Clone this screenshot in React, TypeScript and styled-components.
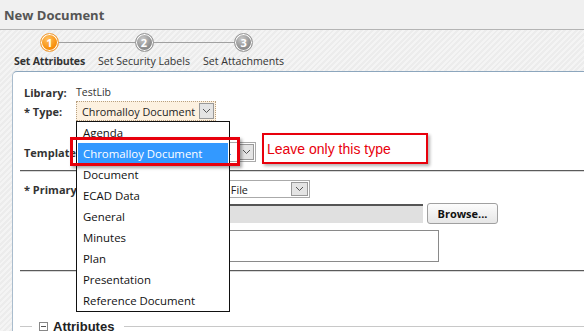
import React from "react";
import styled, { createGlobalStyle } from "styled-components";

const Global = createGlobalStyle`
  html, body { margin: 0; padding: 0; }
  body {
    width: 584px; height: 331px; overflow: hidden;
    font-family: "Open Sans", "Noto Sans", sans-serif;
    background: #efefef;
  }
  #root { height: 100%; }
`;

const Page = styled.div`
  display: flex; flex-direction: column; height: 331px;
  background: repeating-linear-gradient(135deg, #ececec 0 2px, #f4f4f4 2px 4px);
`;

const Header = styled.div`
  height: 29px; background: #f0f0f0; border-bottom: 1px solid #b4b4b4;
  display: flex; align-items: center; padding-left: 4px;
  font-weight: 700; font-size: 13px; color: #555;
`;

const StepBar = styled.div`
  position: relative; height: 41px; display: flex; gap: 13px;
  padding-left: 14px; box-sizing: border-box; padding-top: 3px;
  &::before {
    content: ""; position: absolute; left: 50px; width: 195px; top: 12px;
    height: 1px; background: #a0a0a0;
  }
`;

const Step = styled.div`
  display: flex; flex-direction: column; align-items: center; gap: 2px;
  position: relative; z-index: 1;
`;

const Circle = styled.div<{ $active?: boolean }>`
  width: 17px; height: 17px; border-radius: 50%;
  border: 1px solid ${(p) => (p.$active ? "#f0a040" : "#999")};
  box-shadow: inset 0 0 0 1px #fff;
  background: ${(p) =>
    p.$active
      ? "radial-gradient(circle at 40% 30%, #ffc060, #f8900c 60%, #e77a00)"
      : "radial-gradient(circle at 40% 30%, #c8c8c8, #8e8e8e 60%, #777)"};
  color: #fff; font-size: 11px; font-weight: 700;
  display: flex; align-items: center; justify-content: center; line-height: 1;
`;

const StepLabel = styled.div<{ $active?: boolean }>`
  font-size: 10.6px; line-height: 14px; color: #333;
  font-weight: ${(p) => (p.$active ? 700 : 400)};
  letter-spacing: ${(p) => (p.$active ? "-0.2px" : "0")};
  white-space: nowrap;
`;

const Panel = styled.div`
  flex: 1; margin-left: 12px; position: relative;
  background: #fff; border-top: 1px solid #8ca6bd; border-left: 1px solid #a9bccd;
  border-top-left-radius: 5px; overflow: hidden;
`;

const Form = styled.div`
  padding: 12px 0 0 7px; display: flex; flex-direction: column;
`;

const Row = styled.div<{ $mt?: number; $h: number }>`
  display: flex; align-items: center; height: ${(p) => p.$h}px;
  margin-top: ${(p) => p.$mt ?? 0}px; padding-left: 4px;
`;

const Label = styled.div`
  width: 52px; flex: none; font-size: 11px; font-weight: 700; color: #333;
  white-space: nowrap;
`;

const Value = styled.div`
  font-size: 10.5px; color: #333;
`;

const Select = styled.div<{ $w: number; $bg?: string; $dotted?: boolean; $ml?: number }>`
  width: ${(p) => p.$w}px; height: 100%; box-sizing: border-box;
  margin-left: ${(p) => p.$ml ?? 0}px;
  border: 1px ${(p) => (p.$dotted ? "dotted #b8a080" : "solid #aaa")};
  background: ${(p) => p.$bg ?? "#fff"};
  display: flex; align-items: center;
  padding: 0 1px 0 5px; font-size: 10.8px; color: #222; white-space: nowrap; overflow: hidden;
`;

const SelectText = styled.span<{ $right?: boolean }>`
  flex: 1; overflow: hidden; text-align: ${(p) => (p.$right ? "right" : "left")};
  padding-right: ${(p) => (p.$right ? 7 : 0)}px;
`;

const ArrowBox = styled.div<{ $w?: number }>`
  width: ${(p) => p.$w ?? 15}px; height: calc(100% - 2px); box-sizing: border-box;
  border: 1px solid #999; background: #e4e4e4; flex: none;
  display: flex; align-items: center; justify-content: center;
`;

const Chevron = () => (
  <svg width="9" height="6" viewBox="0 0 9 6">
    <path d="M1 1 L4.5 4.5 L8 1" fill="none" stroke="#555" strokeWidth="1" />
  </svg>
);

const Rule = styled.div<{ $mt: number }>`
  margin-top: ${(p) => p.$mt}px; height: 0;
  border-top: 1px solid #5a5a5a; border-bottom: 1px solid #d8d8d8;
`;

const FileBar = styled.div`
  width: 347px; height: 19px; margin-left: 52px; box-sizing: border-box;
  border-top: 2px solid #555; background: #e0e0e0;
`;

const Button = styled.div`
  margin-left: 4px; width: 71px; height: 21px; box-sizing: border-box;
  border: 1px solid #a0a0a0; border-radius: 3px;
  background: linear-gradient(#fcfcfc, #e6e6e6);
  font-size: 11px; font-weight: 700; color: #111;
  display: flex; align-items: center; justify-content: center;
`;

const TextArea = styled.div`
  width: 363px; height: 32px; margin-left: 52px; box-sizing: border-box;
  border: 1px solid #8a8a8a;
`;

const Legend = styled.div`
  display: flex; align-items: center; margin-top: 46px; height: 16px;
`;

const LegendLine = styled.div<{ $w?: number; $ml?: number }>`
  height: 1px; background: #c8c8c8;
  width: ${(p) => (p.$w ? p.$w + "px" : "auto")};
  flex: ${(p) => (p.$w ? "none" : 1)};
  margin-left: ${(p) => p.$ml ?? 0}px;
`;

const MinusBox = styled.div`
  width: 9px; height: 9px; box-sizing: border-box; border: 1px solid #888;
  margin-left: 7px; display: flex; align-items: center; justify-content: center;
  &::after { content: ""; width: 5px; height: 1px; background: #555; }
`;

const LegendText = styled.div`
  margin-left: 5px; font-family: "Liberation Sans", Arial, sans-serif;
  font-size: 13px; font-weight: 700; color: #222;
`;

const DropList = styled.div`
  position: absolute; left: 63px; top: 49px; width: 154px;
  border: 1px solid #111; background: #fff; box-sizing: border-box;
  padding: 0 1px; z-index: 5;
`;

const Item = styled.div<{ $sel?: boolean }>`
  height: 21px; display: flex; align-items: center; padding-left: 5px;
  font-size: 11.4px; color: ${(p) => (p.$sel ? "#fff" : "#111")};
  background: ${(p) => (p.$sel ? "#3399ff" : "transparent")};
  white-space: nowrap;
`;

const RedFrame = styled.div`
  position: absolute; left: 57px; top: 65px; width: 170px; height: 29px;
  box-sizing: border-box; border: 3px solid #e8000c; z-index: 6;
  box-shadow: 2px 2px 3px rgba(0, 0, 0, 0.35);
`;

const Note = styled.div`
  position: absolute; left: 249px; top: 61px; width: 166px; height: 31px;
  box-sizing: border-box; border: 2px solid #e8000c; background: #fff;
  box-shadow: 2px 2px 3px rgba(0, 0, 0, 0.3);
  font-family: "Liberation Sans", Arial, sans-serif; font-size: 14px; color: #e8000c;
  display: flex; align-items: center; padding-left: 3px; z-index: 6;
`;

const items = [
  "Agenda",
  "Chromalloy Document",
  "Document",
  "ECAD Data",
  "General",
  "Minutes",
  "Plan",
  "Presentation",
  "Reference Document",
];

export default function App() {
  return (
    <Page>
      <Global />
      <Header>New Document</Header>
      <StepBar>
        <Step>
          <Circle $active>1</Circle>
          <StepLabel $active>Set Attributes</StepLabel>
        </Step>
        <Step>
          <Circle>2</Circle>
          <StepLabel>Set Security Labels</StepLabel>
        </Step>
        <Step>
          <Circle>3</Circle>
          <StepLabel>Set Attachments</StepLabel>
        </Step>
      </StepBar>
      <Panel>
        <Form>
          <Row $h={16}>
            <Label>Library:</Label>
            <Value>TestLib</Value>
          </Row>
          <Row $h={20} $mt={1}>
            <Label>* Type:</Label>
            <Select $w={140} $bg="#fdf1e0" $dotted>
              <SelectText>Chromalloy Document</SelectText>
              <ArrowBox>
                <Chevron />
              </ArrowBox>
            </Select>
          </Row>
          <Row $h={20} $mt={21}>
            <Label>Template</Label>
            <Select $w={180}>
              <SelectText $right>-</SelectText>
              <ArrowBox $w={16}>
                <Chevron />
              </ArrowBox>
            </Select>
          </Row>
          <Rule $mt={8} />
          <Row $h={18} $mt={8}>
            <Label>* Primary</Label>
            <Select $w={114} $ml={120}>
              <SelectText>Local File</SelectText>
              <ArrowBox $w={17}>
                <Chevron />
              </ArrowBox>
            </Select>
          </Row>
          <Row $h={21} $mt={5}>
            <FileBar />
            <Button>Browse...</Button>
          </Row>
          <Row $h={32} $mt={6}>
            <TextArea />
          </Row>
          <Rule $mt={8} />
          <Legend>
            <LegendLine $w={12} />
            <MinusBox />
            <LegendText>Attributes</LegendText>
            <LegendLine $ml={10} />
          </Legend>
        </Form>
        <DropList>
          {items.map((t, i) => (
            <Item key={t} $sel={i === 1}>
              {t}
            </Item>
          ))}
        </DropList>
        <RedFrame />
        <Note>Leave only this type</Note>
      </Panel>
    </Page>
  );
}
